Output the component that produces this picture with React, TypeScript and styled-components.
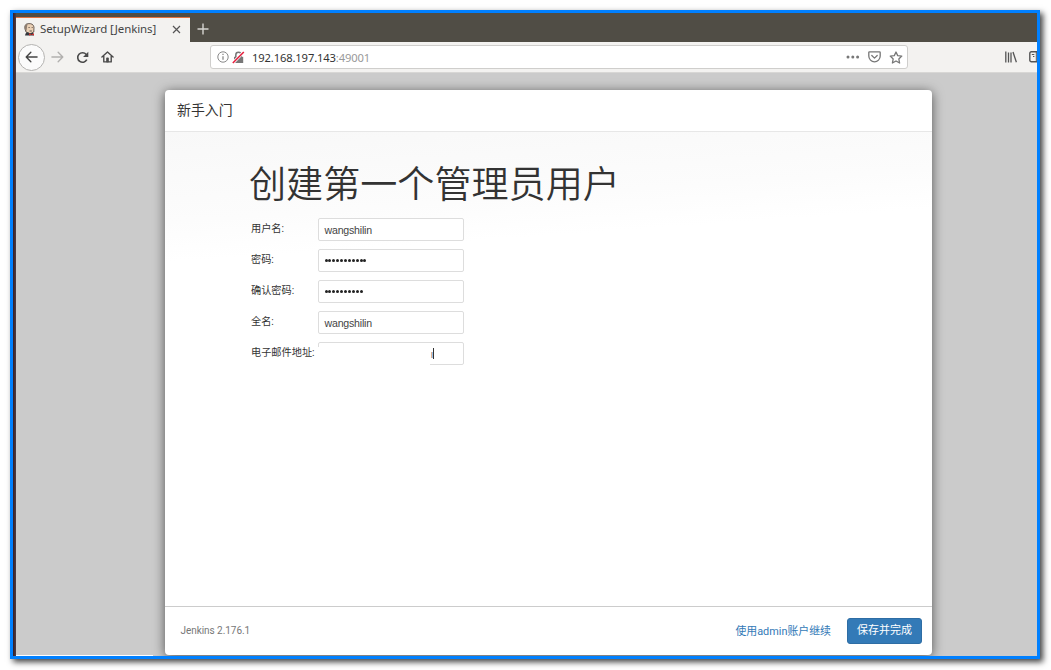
import React from "react";
import styled, { createGlobalStyle } from "styled-components";

const Global = createGlobalStyle`
  * { box-sizing: border-box; }
  body { margin: 0; background: #fff; overflow: hidden; }
`;

const Page = styled.div`
  width: 1051px;
  height: 670px;
  padding: 10px 11px 11px 10px;
  background: #fff;
`;

const Frame = styled.div`
  display: flex;
  width: 1030px;
  height: 649px;
  border: 3px solid #0080ff;
  box-shadow: 3px 3px 6px rgba(0, 0, 0, 0.75);
  overflow: hidden;
`;

const DesktopEdge = styled.div`
  flex: 0 0 3px;
  background: linear-gradient(90deg, #351f28, #503c44);
`;

const Browser = styled.div`
  flex: 1;
  min-width: 0;
  display: flex;
  flex-direction: column;
  font-family: "Noto Sans", "Open Sans", sans-serif;
`;

const TabBar = styled.div`
  flex: 0 0 29px;
  display: flex;
  align-items: stretch;
  padding-top: 4px;
  background: #504d45;
`;

const Tab = styled.div`
  display: flex;
  align-items: center;
  width: 174px;
  padding: 0 9px 2px 7px;
  border-top: 1px solid #e2713f;
  background: #f3f2f0;
  color: #454545;
`;

const TabTitle = styled.span`
  flex: 1;
  margin-left: 4px;
  font-size: 11.5px;
  line-height: 16px;
  letter-spacing: -0.1px;
  white-space: nowrap;
`;

const NewTab = styled.div`
  display: flex;
  align-items: center;
  padding: 0 0 2px 7px;
`;

const Toolbar = styled.div`
  flex: 0 0 31px;
  display: flex;
  align-items: center;
  padding-left: 2px;
  border-bottom: 1px solid #d8d7d5;
  background: #f3f2f0;
`;

const BackButton = styled.div`
  display: flex;
  align-items: center;
  justify-content: center;
  width: 27px;
  height: 27px;
  border: 1px solid #b4b3b1;
  border-radius: 50%;
  background: #fbfbfb;
`;

const NavIcons = styled.div`
  display: flex;
  align-items: center;
  gap: 12px;
  margin-left: 6px;
`;

const UrlBar = styled.div`
  display: flex;
  align-items: center;
  width: 698px;
  height: 24px;
  margin-left: 96px;
  padding: 0 4px 0 6px;
  border: 1px solid #cfcecc;
  border-radius: 3px;
  background: #fff;
`;

const Url = styled.span`
  flex: 1;
  margin-left: 7px;
  padding-top: 1px;
  font-size: 11.2px;
  line-height: 16px;
  letter-spacing: -0.13px;
  color: #333;
`;

const Port = styled.span`
  color: #999;
`;

const UrlActions = styled.div`
  display: flex;
  align-items: center;
  gap: 8px;
`;

const RightTools = styled.div`
  display: flex;
  align-items: center;
  flex: 1;
  min-width: 0;
  gap: 12px;
  margin-left: 97px;
  overflow: hidden;
  svg { flex-shrink: 0; }
`;

const Viewport = styled.div`
  flex: 1;
  padding: 17px 105px 1px 149px;
  background: linear-gradient(#fff, #fff) 0 100% / 137px 1px no-repeat #cbcbcb;
`;

const Dialog = styled.div`
  display: flex;
  flex-direction: column;
  width: 767px;
  height: 565px;
  border-radius: 4px;
  background: #fff;
  box-shadow: 0 2px 12px rgba(0, 0, 0, 0.6);
  font-family: Roboto, "Noto Sans CJK SC", sans-serif;
  color: #333;
  overflow: hidden;
`;

const DialogHeader = styled.div`
  flex: 0 0 42px;
  padding-left: 12px;
  border-bottom: 1px solid #e7e7e7;
  font-size: 13.9px;
  line-height: 41px;
`;

const DialogBody = styled.div`
  flex: 1;
  padding: 28px 0 0 84px;
  background: linear-gradient(176deg, #f8f8f8 0, #fcfcfc 90px, #fff 130px);
`;

const Title = styled.h1`
  margin: 0;
  font-family: "Noto Sans CJK SC", sans-serif;
  font-size: 37.1px;
  font-weight: 350;
  line-height: 44px;
  color: #333;
`;

const Form = styled.div`
  display: flex;
  flex-direction: column;
  gap: 8px;
  margin: 14px 0 0 2px;
`;

const Row = styled.label`
  display: flex;
  height: 23px;
`;

const Label = styled.span`
  width: 66.5px;
  padding-top: 1px;
  font-size: 10.2px;
  line-height: 20px;
  white-space: nowrap;
`;

const Field = styled.span<{ $blank?: boolean }>`
  display: flex;
  align-items: center;
  position: relative;
  width: 146px;
  height: 23px;
  padding: 0 6px;
  border: 1px solid #ddd;
  border-radius: 2px;
  background: #fff;
  font-family: "Liberation Sans", Arial, sans-serif;
  font-size: 10.6px;
  line-height: 22px;
  letter-spacing: -0.2px;
  color: #444;

  ${({ $blank }) =>
    $blank &&
    `&::before {
      content: "";
      position: absolute;
      left: -1px;
      top: 4px;
      width: 112px;
      height: 18px;
      background: #fff;
    }`}
`;

const Dots = styled.span`
  display: flex;
  gap: 0.9px;
`;

const Dot = styled.i`
  width: 3px;
  height: 3px;
  border-radius: 50%;
  background: #222;
`;

const Caret = styled.span`
  width: 1px;
  height: 11px;
  background: #333;
`;

const Typed = styled.span`
  margin-left: 106px;
  color: #777;
`;

const DialogFooter = styled.div`
  flex: 0 0 49px;
  display: flex;
  align-items: center;
  padding: 0 10px 1px 15.5px;
  border-top: 1px solid #ccc;
  font-size: 11px;
`;

const Version = styled.span`
  flex: 1;
  font-size: 10px;
  letter-spacing: -0.05px;
  color: #777;
`;

const Link = styled.a`
  margin-right: 16px;
  padding-bottom: 2px;
  font-size: 10.9px;
  color: #337ab7;
`;

const Save = styled.button`
  width: 75px;
  height: 26px;
  padding: 0;
  border: 1px solid #2e6da4;
  border-radius: 3px;
  background: #337ab7;
  color: #fff;
  font: inherit;
  line-height: 24px;
`;

const Jenkins = () => (
  <svg width="13" height="13" viewBox="0 0 13 13">
    <path d="M2 6Q1 1 5 .7Q10 0 11 4L10.8 9L7 11L3 9Z" fill="#ead0b5" stroke="#493d37" strokeWidth=".8" />
    <path d="M1.8 6Q1 1.4 4.6.8L4 4L3.5 8Z" fill="#8d7d70" />
    <path d="M2 12.6Q2.5 9 5 9.2L7 10.5L10 9.5L11 12.6Z" fill="#34383e" />
    <path d="M6 10.3L8.5 11.4L11 10.3V12.6L8.5 11.8L6 12.6Z" fill="#cf302e" />
    <path d="M5.5 4.5h1.2M8.7 4.5h1M6.5 8h2.4" stroke="#493d37" strokeWidth=".8" />
  </svg>
);

const Arrow = ({ back }: { back?: boolean }) => (
  <svg width="13" height="14" viewBox="0 0 14 14" fill="none" stroke={back ? "#444" : "#b2b1af"} strokeWidth="1.5" strokeLinecap="round" strokeLinejoin="round">
    <path d={back ? "M13 7H1.5M6.3 2L1.3 7l5 5" : "M1 7h11.5M7.7 2l5 5-5 5"} />
  </svg>
);

const password = (count: number) => (
  <Dots>
    {Array.from({ length: count }, (_, i) => <Dot key={i} />)}
  </Dots>
);

const fields = [
  { label: "用户名:", value: "wangshilin" },
  { label: "密码:", value: password(11) },
  { label: "确认密码:", value: password(10) },
  { label: "全名:", value: "wangshilin" },
];

export default function App() {
  return (
    <Page>
      <Global />
      <Frame>
        <DesktopEdge />
        <Browser>
          <TabBar>
            <Tab>
              <Jenkins />
              <TabTitle>SetupWizard [Jenkins]</TabTitle>
              <svg width="9" height="9" viewBox="0 0 9 9" stroke="#555" strokeWidth="1.2">
                <path d="M1 1l7 7M8 1L1 8" />
              </svg>
            </Tab>
            <NewTab>
              <svg width="12" height="12" viewBox="0 0 12 12" stroke="#d6d5d1" strokeWidth="1.4">
                <path d="M6 .5v11M.5 6h11" />
              </svg>
            </NewTab>
          </TabBar>
          <Toolbar>
            <BackButton><Arrow back /></BackButton>
            <NavIcons>
              <Arrow />
              <svg width="13" height="13" viewBox="0 0 13 13" fill="none" stroke="#4a4a4a" strokeWidth="1.6">
                <path d="M10.8 8.7A4.8 4.8 0 1 1 10.2 3.4" />
                <path d="M12.3.8v5.2H7.1z" fill="#4a4a4a" stroke="none" />
              </svg>
              <svg width="13" height="14" viewBox="0 0 14 14" fill="none" stroke="#4a4a4a" strokeWidth="1.5" strokeLinejoin="round" strokeLinecap="round">
                <path d="M1 7l6-5.5L13 7M3 6v6.3h8V6" />
                <path d="M6 12V8h2v4z" fill="#4a4a4a" strokeWidth=".8" />
              </svg>
            </NavIcons>
            <UrlBar>
              <svg width="12" height="12" viewBox="0 0 12 12" fill="none" stroke="#898989">
                <circle cx="6" cy="6" r="5.2" />
                <path d="M6 5.2v3.6M6 2.8v1.3" strokeWidth="1.3" />
              </svg>
              <svg width="13" height="13" viewBox="0 0 13 13" style={{ marginLeft: 3 }}>
                <path d="M3.8 6V4a2.7 2.7 0 0 1 5.4 0v2" fill="none" stroke="#777" strokeWidth="1.5" />
                <path d="M2 5.8h9.2V12H2z" fill="#777" />
                <path d="M.8 12.2L11.8.8" stroke="#fff" strokeWidth="3" />
                <path d="M.8 12L11.8 1" stroke="#e5213f" strokeWidth="1.6" />
              </svg>
              <Url>192.168.197.143<Port>:49001</Port></Url>
              <UrlActions>
                <svg width="14" height="4" viewBox="0 0 14 4" fill="#777">
                  <circle cx="2" cy="2" r="1.5" /><circle cx="6.8" cy="2" r="1.5" /><circle cx="11.6" cy="2" r="1.5" />
                </svg>
                <svg width="13" height="12" viewBox="0 0 13 12" fill="none" stroke="#777" strokeWidth="1.3" strokeLinecap="round" strokeLinejoin="round">
                  <path d="M1.5.8h10q.7 0 .7.8v3.5a5.7 5.7 0 0 1-11.4 0V1.6q0-.8.7-.8z" />
                  <path d="M3.8 4.5l2.7 2.6 2.7-2.6" />
                </svg>
                <svg width="14" height="13" viewBox="0 0 14 13" fill="none" stroke="#777" strokeWidth="1.3" strokeLinejoin="round">
                  <path d="M7 1l1.7 3.6 4.1.5-3 2.8.8 4.1L7 10l-3.6 2 .8-4.1-3-2.8 4.1-.5z" />
                </svg>
              </UrlActions>
            </UrlBar>
            <RightTools>
              <svg width="12" height="12" viewBox="0 0 12 12" stroke="#555" strokeWidth="1.3">
                <path d="M.8.5v11M3.5 1.5v10M6 1.5v10M8 1l3.4 10.3" />
              </svg>
              <svg width="15" height="12" viewBox="0 0 15 12" fill="none" stroke="#555" strokeWidth="1.4">
                <rect x=".8" y=".8" width="13" height="10" rx="1.5" />
                <path d="M7.3 1v10M2.8 3.5h2.5M4 5.5h1.4" strokeWidth="1" />
              </svg>
            </RightTools>
          </Toolbar>
          <Viewport>
            <Dialog>
              <DialogHeader>新手入门</DialogHeader>
              <DialogBody>
                <Title>创建第一个管理员用户</Title>
                <Form>
                  {fields.map(({ label, value }) => (
                    <Row key={label}>
                      <Label>{label}</Label>
                      <Field>{value}</Field>
                    </Row>
                  ))}
                  <Row>
                    <Label>电子邮件地址:</Label>
                    <Field $blank><Typed>ı</Typed><Caret /></Field>
                  </Row>
                </Form>
              </DialogBody>
              <DialogFooter>
                <Version>Jenkins 2.176.1</Version>
                <Link>使用admin账户继续</Link>
                <Save>保存并完成</Save>
              </DialogFooter>
            </Dialog>
          </Viewport>
        </Browser>
      </Frame>
    </Page>
  );
}
